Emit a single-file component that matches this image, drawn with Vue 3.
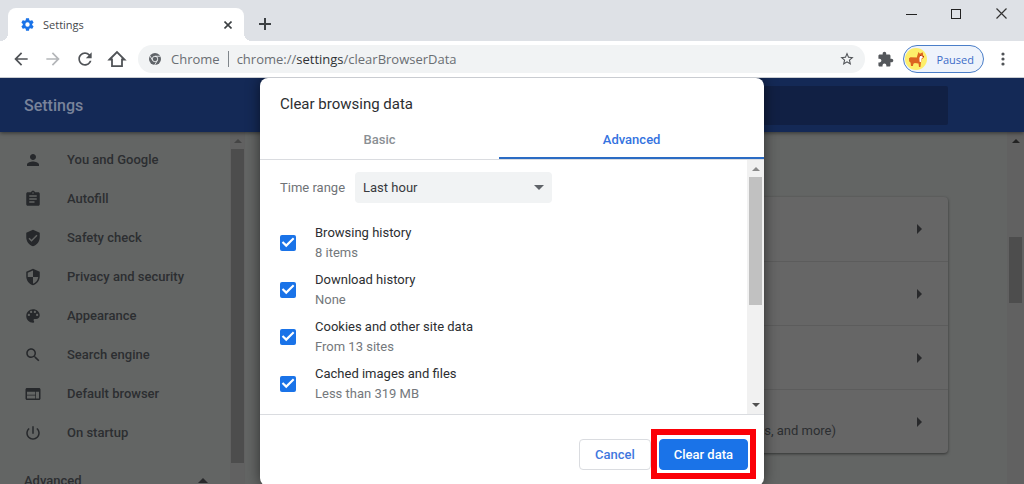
<script setup>
import { ref } from 'vue'

const nav = [
  { label: 'You and Google', d: 'M12 12c2.21 0 4-1.79 4-4s-1.79-4-4-4-4 1.79-4 4 1.79 4 4 4zm0 2c-2.67 0-8 1.34-8 4v2h16v-2c0-2.66-5.33-4-8-4z' },
  { label: 'Autofill', d: 'M19 3h-4.18C14.4 1.84 13.3 1 12 1s-2.4.84-2.82 2H5c-1.1 0-2 .9-2 2v14c0 1.1.9 2 2 2h14c1.1 0 2-.9 2-2V5c0-1.1-.9-2-2-2zm-7 0c.55 0 1 .45 1 1s-.45 1-1 1-1-.45-1-1 .45-1 1-1zm2 14H7v-2h7v2zm3-4H7v-2h10v2zm0-4H7V7h10v2z' },
  { label: 'Safety check', d: 'M12 1L3 5v6c0 5.55 3.84 10.74 9 12 5.16-1.26 9-6.45 9-12V5l-9-4zm-2 16l-4-4 1.41-1.41L10 14.17l6.59-6.59L18 9l-8 8z' },
  { label: 'Privacy and security', d: 'M12 1L3 5v6c0 5.55 3.84 10.74 9 12 5.16-1.26 9-6.45 9-12V5l-9-4zm0 10.99h7c-.53 4.12-3.28 7.79-7 8.94V12H5V6.3l7-3.11v8.8z' },
  { label: 'Appearance', d: 'M12 3c-4.97 0-9 4.03-9 9s4.03 9 9 9c.83 0 1.5-.67 1.5-1.5 0-.39-.15-.74-.39-1.01-.23-.26-.38-.61-.38-.99 0-.83.67-1.5 1.5-1.5H16c2.76 0 5-2.24 5-5 0-4.42-4.03-8-9-8zm-5.5 9c-.83 0-1.5-.67-1.5-1.5S5.67 9 6.5 9 8 9.67 8 10.5 7.33 12 6.5 12zm3-4C8.67 8 8 7.33 8 6.5S8.67 5 9.5 5s1.5.67 1.5 1.5S10.33 8 9.5 8zm5 0c-.83 0-1.5-.67-1.5-1.5S13.67 5 14.5 5s1.5.67 1.5 1.5S15.33 8 14.5 8zm3 4c-.83 0-1.5-.67-1.5-1.5S16.67 9 17.5 9s1.5.67 1.5 1.5-.67 1.5-1.5 1.5z' },
  { label: 'Search engine', d: 'M15.5 14h-.79l-.28-.27C15.41 12.59 16 11.11 16 9.5 16 5.91 13.09 3 9.5 3S3 5.91 3 9.5 5.91 16 9.5 16c1.61 0 3.09-.59 4.23-1.57l.27.28v.79l5 4.99L20.49 19l-4.99-5zm-6 0C7.01 14 5 11.99 5 9.5S7.01 5 9.5 5 14 7.01 14 9.5 11.99 14 9.5 14z' },
  { label: 'Default browser', d: 'M20 4H4c-1.1 0-1.99.9-1.99 2L2 18c0 1.1.9 2 2 2h16c1.1 0 2-.9 2-2V6c0-1.1-.9-2-2-2zm-5 14H4v-4h11v4zm0-5H4V9h11v4zm5 5h-4V9h4v9z' },
  { label: 'On startup', d: 'M13 3h-2v10h2V3zm4.83 2.17l-1.42 1.42C17.99 7.86 19 9.81 19 12c0 3.87-3.13 7-7 7s-7-3.13-7-7c0-2.19 1.01-4.14 2.58-5.42L6.17 5.17C4.23 6.82 3 9.26 3 12c0 4.97 4.03 9 9 9s9-4.03 9-9c0-2.74-1.23-5.18-3.17-6.83z' }
]

const rows = ['', '', '', 'pop-ups, and more)']

const items = ref([
  { id: 'history', label: 'Browsing history', note: '8 items', on: true },
  { id: 'downloads', label: 'Download history', note: 'None', on: true },
  { id: 'cookies', label: 'Cookies and other site data', note: 'From 13 sites', on: true },
  { id: 'cache', label: 'Cached images and files', note: 'Less than 319 MB', on: true }
])
const range = ref('Last hour')
</script>

<template>
  <div class="window">
    <div class="strip">
      <div class="tab">
        <svg class="gear" viewBox="0 0 24 24"><path fill="#1a73e8" d="M19.43 12.98c.04-.32.07-.64.07-.98s-.03-.66-.07-.98l2.11-1.65c.19-.15.24-.42.12-.64l-2-3.46c-.12-.22-.39-.3-.61-.22l-2.49 1c-.52-.4-1.08-.73-1.69-.98l-.38-2.65C14.46 2.18 14.25 2 14 2h-4c-.25 0-.46.18-.49.42l-.38 2.65c-.61.25-1.17.59-1.69.98l-2.49-1c-.23-.09-.49 0-.61.22l-2 3.46c-.13.22-.07.49.12.64l2.11 1.65c-.04.32-.07.65-.07.98s.03.66.07.98l-2.11 1.65c-.19.15-.24.42-.12.64l2 3.46c.12.22.39.3.61.22l2.49-1c.52.4 1.08.73 1.69.98l.38 2.65c.03.24.24.42.49.42h4c.25 0 .46-.18.49-.42l.38-2.65c.61-.25 1.17-.59 1.69-.98l2.49 1c.23.09.49 0 .61-.22l2-3.46c.12-.22.07-.49-.12-.64l-2.11-1.65zM12 15.500a3.500 3.500 0 1 1 0-7 3.500 3.500 0 0 1 0 7z" /></svg>
        <span class="tab-title">Settings</span>
        <button class="plain" aria-label="Close tab"><svg width="8" height="8" viewBox="0 0 8 8"><path d="M.5.5l7 7M7.500.5l-7 7" stroke="#3c4043" stroke-width="1.600" /></svg></button>
      </div>
      <button class="plain new-tab" aria-label="New tab"><svg width="12" height="12" viewBox="0 0 12 12"><path d="M6 0v12M0 6h12" stroke="#3c4043" stroke-width="2" /></svg></button>
      <div class="controls">
        <button class="plain" aria-label="Minimize"><svg width="11" height="11" viewBox="0 0 11 11"><path d="M0 6.500h11" stroke="#222" /></svg></button>
        <button class="plain" aria-label="Maximize"><svg width="11" height="11" viewBox="0 0 11 11"><rect x=".5" y="1.500" width="9" height="9" fill="none" stroke="#222" /></svg></button>
        <button class="plain" aria-label="Close"><svg width="11" height="11" viewBox="0 0 11 11"><path d="M.5.5l10 10M10.500.5l-10 10" stroke="#333" stroke-width="1.200" /></svg></button>
      </div>
    </div>

    <div class="toolbar">
      <button class="plain" aria-label="Back"><svg width="20" height="20" viewBox="0 0 24 24"><path fill="#505357" d="M20 11H7.830l5.590-5.590L12 4l-8 8 8 8 1.410-1.410L7.830 13H20v-2z" /></svg></button>
      <button class="plain" aria-label="Forward"><svg width="20" height="20" viewBox="0 0 24 24"><path fill="#b4b6b9" d="M12 4l-1.410 1.410L16.170 11H4v2h12.170l-5.580 5.590L12 20l8-8z" /></svg></button>
      <button class="plain" aria-label="Reload"><svg width="20" height="20" viewBox="0 0 24 24"><path fill="#505357" d="M17.650 6.350C16.200 4.900 14.210 4 12 4c-4.420 0-7.990 3.580-7.990 8s3.570 8 7.990 8c3.730 0 6.840-2.550 7.730-6h-2.080c-.82 2.330-3.040 4-5.650 4-3.310 0-6-2.690-6-6s2.690-6 6-6c1.660 0 3.140.69 4.220 1.780L13 11h7V4l-2.350 2.350z" /></svg></button>
      <button class="plain" aria-label="Home"><svg width="20" height="20" viewBox="0 0 20 20"><path fill="none" stroke="#505357" stroke-width="1.800" d="M2.500 10.500L10 3l7.500 7.500H15v6.700H5v-6.700z" /></svg></button>
      <div class="omnibox">
        <svg width="12" height="12" viewBox="0 0 24 24"><circle cx="12" cy="12" r="12" fill="#5f6368" /><circle cx="12" cy="12" r="5.500" fill="none" stroke="#f1f3f4" stroke-width="1.700" /><path d="M12 6.500h11M7.200 14.700L1.800 5.500M16.800 14.700L11.300 24" stroke="#f1f3f4" stroke-width="1.700" /></svg>
        <span>Chrome</span>
        <i class="bar"></i>
        <span class="url">chrome://<b>settings</b>/clearBrowserData</span>
        <button class="plain star" aria-label="Bookmark"><svg width="16" height="16" viewBox="0 0 24 24"><path fill="#505357" d="M22 9.240l-7.190-.62L12 2 9.190 8.630 2 9.240l5.460 4.730L5.820 21 12 17.270 18.180 21l-1.630-7.030L22 9.240zM12 15.400l-3.760 2.270 1-4.280-3.320-2.880 4.380-.38L12 6.100l1.710 4.040 4.380.38-3.320 2.880 1 4.280L12 15.400z" /></svg></button>
      </div>
      <button class="plain ext" aria-label="Extensions"><svg width="17" height="17" viewBox="0 0 24 24"><path fill="#54575b" d="M20.500 11H19V7c0-1.100-.9-2-2-2h-4V3.500C13 2.120 11.880 1 10.500 1S8 2.120 8 3.500V5H4c-1.100 0-1.990.9-1.990 2v3.800H3.500c1.490 0 2.700 1.210 2.700 2.700s-1.210 2.700-2.700 2.700H2V20c0 1.100.9 2 2 2h3.800v-1.500c0-1.490 1.210-2.700 2.700-2.700s2.700 1.210 2.700 2.700V22H17c1.100 0 2-.9 2-2v-4h1.500c1.380 0 2.500-1.120 2.500-2.500S21.880 11 20.500 11z" /></svg></button>
      <button class="profile">
        <svg width="22" height="22" viewBox="0 0 22 22"><circle cx="11" cy="11" r="11" fill="#fdee6a" /><path fill="#dc6420" d="M4 10.200l1.500-1 6.300.3.700-2.500 1-3 1.400 1.800 2.800-1.600.4 2.800.9 2.600-2.200 1.700-.8 3.100-.6 4.600h-1.400l-.5-3.600-3.700-.4-1.400.7-.5 2.300H6l-.4-3.200-1.500-1.600z" /><path fill="#fff" d="M15.500 7.500l2.700 1.500-1.600 1.500-.5 3.800-1.500-.5-.2-3.800z" /><path fill="#a83b10" d="M15 7h1v1h-1zM17.800 8h1.200v1h-1.200z" /></svg>
        <span>Paused</span>
      </button>
      <button class="plain more" aria-label="Menu"><svg width="4" height="14" viewBox="0 0 4 14"><g fill="#505357"><circle cx="2" cy="2" r="1.600" /><circle cx="2" cy="7" r="1.600" /><circle cx="2" cy="12" r="1.600" /></g></svg></button>
    </div>

    <div class="page">
      <header class="head">
        <h1>Settings</h1>
        <div class="search"></div>
      </header>
      <div class="body">
        <nav class="side">
          <div class="links">
            <a v-for="n in nav" :key="n.label" href="#"><svg width="18" height="18" viewBox="0 0 24 24"><path :d="n.d" /></svg>{{ n.label }}</a>
            <button class="adv">Advanced<i class="up"></i></button>
          </div>
          <div class="scroll dim side-scroll"><i class="up"></i><div class="thumb"></div></div>
        </nav>
        <main class="main">
          <div class="card">
            <div v-for="(r, i) in rows" :key="i" class="row"><span>{{ r }}</span><i class="right"></i></div>
          </div>
        </main>
        <div class="scroll dim page-scroll"><i class="up"></i><div class="thumb"></div></div>
      </div>

      <div class="overlay">
        <section class="dialog" role="dialog" aria-labelledby="dlg">
          <h2 id="dlg">Clear browsing data</h2>
          <div class="tabs">
            <button>Basic</button>
            <button class="active">Advanced</button>
          </div>
          <div class="panel">
            <div class="content">
              <div class="range">
                <label for="range">Time range</label>
                <span class="select">
                  <select id="range" v-model="range"><option>Last hour</option></select>
                </span>
              </div>
              <label v-for="it in items" :key="it.id" class="item" :for="it.id">
                <input :id="it.id" v-model="it.on" type="checkbox">
                <span>{{ it.label }}<small>{{ it.note }}</small></span>
              </label>
            </div>
            <div class="scroll dialog-scroll"><i class="up"></i><div class="thumb"></div><i class="down"></i></div>
          </div>
          <div class="foot">
            <button>Cancel</button>
            <button class="primary">Clear data</button>
          </div>
        </section>
      </div>
    </div>
  </div>
</template>

<style>
body { overflow: hidden; }
</style>

<style scoped>
* { box-sizing: border-box; }
.window { height: 100vh; display: flex; flex-direction: column; overflow: hidden; font-family: Roboto, "Liberation Sans", sans-serif; font-size: 13px; color: #2c2e31; background: #fff; }
button { font: inherit; cursor: pointer; }
svg { display: block; flex: none; }
.plain { border: 0; background: none; padding: 0; display: flex; align-items: center; justify-content: center; flex: none; }

.strip { display: flex; align-items: flex-start; background: #dee1e6; padding: 8px 0 0 8px; flex: none; }
.tab { position: relative; width: 236px; height: 33px; display: flex; align-items: center; padding: 0 12px; background: #fff; border-radius: 8px 8px 0 0; }
.tab::before, .tab::after { content: ""; position: absolute; bottom: 0; width: 8px; height: 8px; }
.tab::before { left: -8px; background: radial-gradient(circle at 0 0, #dee1e6 8px, #fff 8px); }
.tab::after { right: -8px; background: radial-gradient(circle at 100% 0, #dee1e6 8px, #fff 8px); }
.gear { width: 15px; height: 15px; margin-right: 8px; }
.tab-title { flex: 1; font-family: "Open Sans", sans-serif; font-size: 11px; color: #45484c; }
.new-tab { margin: 10px 0 0 15px; }
.controls { margin-left: auto; display: flex; gap: 34px; padding-right: 17px; }

.toolbar { display: flex; align-items: center; height: 37px; padding: 0 19px 0 11px; border-bottom: 1px solid #c9ccd1; flex: none; }
.toolbar > .plain:nth-child(-n+4) { margin-right: 12px; }
.toolbar > .plain:nth-child(4) { margin-right: 11px; }
.omnibox { flex: 1; display: flex; align-items: center; height: 28px; border-radius: 14px; background: #f1f3f4; padding: 0 10px 0 11px; font-family: "Open Sans", sans-serif; font-size: 13px; color: #6a6e73; }
.omnibox svg { margin-right: 10px; }
.bar { width: 1px; height: 16px; background: #80868b; margin: 0 8px; }
.url b { font-weight: 400; color: #303236; }
.star { margin-left: auto; }
.omnibox .star svg { margin: 0; }
.ext { margin: 0 9px 0 12px; }
.profile { display: flex; align-items: center; gap: 9px; height: 28px; padding: 0 9px 0 1px; border: 1px solid #4a7ec8; border-radius: 14px; background: #eef3fb; color: #3c6cc8; font-family: "Open Sans", sans-serif; font-size: 11px; }
.more { margin-left: 17px; }

.page { position: relative; flex: 1; min-height: 0; display: flex; flex-direction: column; overflow: hidden; background: #636564; }
.head { display: flex; align-items: center; justify-content: space-between; height: 54px; flex: none; padding: 0 76px 0 24px; background: #142956; box-shadow: 0 1px 4px rgba(0, 0, 0, .5); z-index: 1; }
h1 { margin: 0; font-size: 16px; font-weight: 500; color: #79839a; }
.search { width: 50%; height: 39px; background: #112044; border-radius: 2px; }
.body { flex: 1; display: flex; min-height: 0; }
.side { display: flex; width: 245px; flex: none; overflow: hidden; }
.links { flex: 1; padding-top: 8px; }
.links a { display: flex; align-items: center; gap: 25px; height: 39px; padding-left: 24px; color: #2c2e31; text-decoration: none; font-weight: 500; }
.links a svg { fill: #26282b; }
.adv { display: flex; align-items: center; justify-content: space-between; width: 100%; height: 40px; margin-top: 8px; padding: 0 22px 0 24px; border: 0; background: none; color: #2c2e31; font-weight: 500; }
.main { flex: 1; padding: 65px 59px 0 0; }
.card { margin-left: 120px; border-radius: 4px; background: #666; box-shadow: 0 1px 3px rgba(0, 0, 0, .5); }
.row { display: flex; align-items: center; height: 64px; padding-right: 26px; color: #2c2e31; }
.row + .row { border-top: 1px solid #5c5c5c; }
.row span { flex: 1; text-align: right; padding: 18px 81px 0 0; }
.right { border: 5px solid transparent; border-left-color: #28292b; border-right: 0; }

.up, .down { display: block; flex: none; width: 0; height: 0; border: 4px solid transparent; }
.up { border-top: 0; border-bottom-color: #8a8a8a; }
.down { border-bottom: 0; border-top-color: #505050; }
.adv .up { border-width: 0 5px 5px; border-bottom-color: #28292b; }
.scroll { width: 17px; flex: none; display: flex; flex-direction: column; align-items: center; background: #f1f1f1; padding: 7px 0; }
.thumb { width: 13px; background: #c1c1c1; margin-top: 6px; }
.dim { background: #616161; }
.dim .thumb { background: #4d4d4d; }
.side-scroll { width: 15px; }
.side-scroll .up { border-bottom-color: #454545; }
.side-scroll .thumb { height: 314px; }
.page-scroll .up { border-bottom-color: #222; }
.page-scroll .thumb { height: 66px; margin-top: 94px; flex: none; }

.overlay { position: absolute; inset: 0; z-index: 2; display: flex; justify-content: center; align-items: flex-start; }
.dialog { width: 504px; background: #fff; border-radius: 8px; box-shadow: 0 0 14px rgba(0, 0, 0, .55); }
h2 { margin: 0; padding: 17px 20px 0; font-size: 15px; line-height: 18px; font-weight: 400; }
.tabs { display: flex; margin-top: 8px; border-bottom: 1px solid #dadce0; }
.tabs button { flex: 1 1 auto; height: 38px; padding: 0 0 1px; border: 0; background: none; color: #8a8f94; font-weight: 500; }
.tabs .active { color: #3473e0; box-shadow: inset 0 -2px #2b6cc4; }
.panel { display: flex; border-bottom: 1px solid #dadce0; }
.content { flex: 1; padding: 12px 20px 7px; }
.range { display: flex; align-items: center; gap: 10px; margin-bottom: 16px; color: #6f7377; }
.select { position: relative; }
.select::after { content: ""; position: absolute; right: 8px; top: 13px; border: 5px solid transparent; border-top-color: #5f6368; border-bottom: 0; pointer-events: none; }
select { appearance: none; display: block; width: 197px; height: 31px; padding: 0 8px; border: 0; border-radius: 4px; background: #f1f3f4; color: #383a3e; font: inherit; }
.item { display: flex; align-items: center; gap: 19px; height: 47px; }
.item span { line-height: 20px; }
.item small { display: block; font-size: 13px; color: #74787c; }
.item input { appearance: none; width: 16px; height: 16px; margin: 0; border-radius: 2px; border: 2px solid #5f6368; flex: none; }
.item input:checked { border: 0; background: #1a73e8; }
.item input:checked::after { content: ""; display: block; width: 16px; height: 16px; background: #fff; clip-path: polygon(39% 80%, 11% 52%, 20% 42%, 39% 60%, 81% 18%, 90% 28%); }
.dialog-scroll .thumb { height: 128px; }
.dialog-scroll .down { margin-top: auto; }
.foot { display: flex; justify-content: flex-end; gap: 8px; padding: 24px 16px 16px; }
.foot button { position: relative; height: 31px; padding: 0 15px; border: 1px solid #dadce0; border-radius: 4px; background: #fff; color: #3f78de; font-weight: 500; }
.foot .primary { padding: 0 14px; border-color: #1a73e8; background: #1a73e8; color: #fff; }
.primary::after { content: ""; position: absolute; inset: -11px -9px -10px; border: 6px solid #fb0007; pointer-events: none; }
</style>
